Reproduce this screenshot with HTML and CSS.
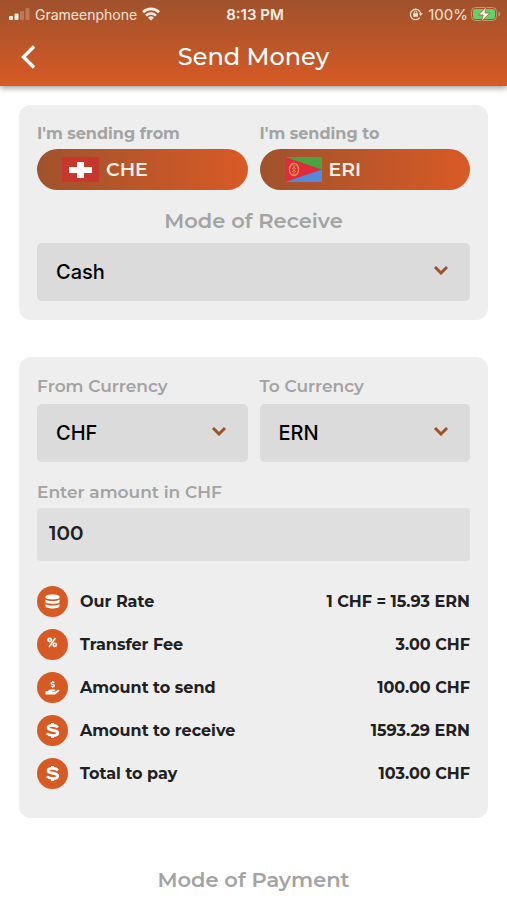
FILE: index.html
```
<!DOCTYPE html>
<html lang="en">

<head>
    <meta charset="utf-8">
    <meta name="viewport" content="width=device-width, initial-scale=1">
    <title>Send Money</title>
    <link rel="stylesheet" href="styles.css">
</head>

<body>
    <header class="header">
        <div class="status-bar">
            <div class="status-left">
                <svg class="signal" width="21" height="14" viewBox="0 0 21 14" fill="#fff0e6">
                    <rect x="0" y="9" width="4" height="4" rx="1" />
                    <rect x="5.500" y="6.500" width="4" height="6.500" rx="1" />
                    <rect x="11" y="4" width="4" height="9" rx="1" opacity="0.25" />
                    <rect x="16.500" y="1" width="4" height="12" rx="1" opacity="0.25" />
                </svg>
                <span>Grameenphone</span>
                <svg width="18" height="14" viewBox="0 0 18 14" fill="none" stroke="#fff0e6" stroke-width="2.6">
                    <path d="M1 5.2a11.4 11.4 0 0 1 16 0" />
                    <path d="M4 8.6a7.1 7.1 0 0 1 10 0" />
                    <path d="M9 13.6 6.1 10.8a4.1 4.1 0 0 1 5.8 0z" fill="#fff0e6" stroke="none" />
                </svg>
            </div>
            <div class="status-time">8:13 PM</div>
            <div class="status-right">
                <svg width="14" height="14" viewBox="0 0 14 14" fill="none" stroke="#fbe3d6" stroke-width="1.3">
                    <path d="M10.8 10.6A5.2 5.2 0 1 1 11.7 6.3" />
                    <path d="M9.8 6.2h4l-2 2.7z" fill="#fbe3d6" stroke="none" />
                    <rect x="4.2" y="6.3" width="4.8" height="3.5" rx="0.6" fill="#fbe3d6" stroke="none" />
                    <path d="M5.3 6.6V5.3a1.3 1.3 0 0 1 2.6 0v1.3" stroke-width="1" />
                </svg>
                <span>100%</span>
                <svg class="battery" width="30" height="16" viewBox="0 0 30 16">
                    <rect x="0.5" y="1.5" width="25" height="13" rx="4" fill="none" stroke="#c99476" />
                    <path d="M27.5 5.5v5c2.2-1 2.2-4 0-5z" fill="#c99476" />
                    <rect x="2" y="3" width="22" height="10" rx="2.5" fill="#5cd467" />
                    <path d="M15.5 0.5 7.5 9h4.6l-1.7 6.5L18.8 7h-4.8z" fill="#fff" stroke="#a8562b" stroke-width="0.8" />
                </svg>
            </div>
        </div>
        <div class="title-bar">
            <button class="back" type="button" aria-label="Back">
                <svg width="16" height="26" viewBox="0 0 16 26" fill="none" stroke="#fff" stroke-width="3.4">
                    <path d="M14 2.500 3.500 13 14 23.500" />
                </svg>
            </button>
            <h1>Send Money</h1>
        </div>
    </header>

    <main class="content">
        <section class="card">
            <div class="columns">
                <div class="field route">
                    <span class="label" id="from-label">I'm sending from</span>
                    <button class="country" type="button" aria-describedby="from-label">
                        <svg width="37" height="25" viewBox="0 0 37 25">
                            <rect width="37" height="25" fill="#c8372d" />
                            <path d="M15 5h7v5h8v6h-8v5h-7v-5H7v-6h8z" fill="#fff" />
                        </svg>
                        <span>CHE</span>
                    </button>
                </div>
                <div class="field route">
                    <span class="label" id="to-label">I'm sending to</span>
                    <button class="country" type="button" aria-describedby="to-label">
                        <svg width="37" height="25" viewBox="0 0 37 25">
                            <rect width="37" height="13" fill="#49a442" />
                            <rect y="12.5" width="37" height="12.5" fill="#5588d8" />
                            <path d="M0 0l37 12.5L0 25z" fill="#df2b3c" />
                            <ellipse cx="9" cy="12.5" rx="4.6" ry="6" fill="none" stroke="#ee9340" stroke-width="1.3" />
                            <path d="M9 8v10M7 12l2-2 2 2M7 15l2-2 2 2" fill="none" stroke="#ee9340" />
                        </svg>
                        <span>ERI</span>
                    </button>
                </div>
            </div>
            <label class="heading" for="receive-mode">Mode of Receive</label>
            <div class="select">
                <select id="receive-mode">
                    <option>Cash</option>
                </select>
                <svg width="16" height="10" viewBox="0 0 16 10"><path d="M2 2l6 6 6-6" /></svg>
            </div>
        </section>

        <section class="card">
            <div class="columns">
                <div class="field">
                    <label class="label" for="from-currency">From Currency</label>
                    <div class="select">
                        <select id="from-currency">
                            <option>CHF</option>
                        </select>
                        <svg width="16" height="10" viewBox="0 0 16 10"><path d="M2 2l6 6 6-6" /></svg>
                    </div>
                </div>
                <div class="field">
                    <label class="label" for="to-currency">To Currency</label>
                    <div class="select">
                        <select id="to-currency">
                            <option>ERN</option>
                        </select>
                        <svg width="16" height="10" viewBox="0 0 16 10"><path d="M2 2l6 6 6-6" /></svg>
                    </div>
                </div>
            </div>
            <div class="field amount">
                <label class="label" for="amount">Enter amount in CHF</label>
                <input id="amount" type="text" inputmode="decimal" value="100">
            </div>

            <svg class="sprite" width="0" height="0">
                <symbol id="dollar" viewBox="0 0 31 31">
                    <path d="M21 12.400c-1.200-1.400-3-2-5.400-2-2.800 0-4.600.9-4.600 2.300 0 3.500 9.800 1.600 9.800 5.200 0 1.700-2.200 2.500-5 2.500-2.700 0-4.800-.7-6-2" fill="none" stroke="#fff" stroke-width="2.8" />
                    <path d="M15.500 8v3M15.500 20v3" stroke="#fff" stroke-width="3" />
                </symbol>
            </svg>
            <dl class="summary">
                <div class="row">
                    <dt>
                        <svg class="icon" viewBox="0 0 31 31" fill="#fff">
                            <path d="M8.500 10.700c0-2.900 14-2.900 14 0v.9c0 2.500-14 2.500-14 0z" />
                            <path d="M8.500 13.600c2.700 2 11.300 2 14 0v2.400c0 2.500-14 2.500-14 0z" />
                            <path d="M8.500 18c2.700 2 11.300 2 14 0v2.200c0 2.900-14 2.900-14 0z" />
                        </svg>
                        Our Rate
                    </dt>
                    <dd>1 CHF = 15.93 ERN</dd>
                </div>
                <div class="row">
                    <dt>
                        <svg class="icon" viewBox="0 0 31 31" fill="none" stroke="#fff" stroke-width="1.6">
                            <path d="M18.500 9l-6.500 9" />
                            <ellipse cx="12.700" cy="11" rx="1.700" ry="1.600" />
                            <ellipse cx="17.800" cy="15.800" rx="1.700" ry="1.600" />
                        </svg>
                        Transfer Fee
                    </dt>
                    <dd>3.00 CHF</dd>
                </div>
                <div class="row">
                    <dt>
                        <svg class="icon" viewBox="0 0 31 31" fill="#fff">
                            <path d="M17.300 10.900c-1-1-3.300-.8-3.300.4 0 1.500 3.400.7 3.400 2.200 0 1.200-2.400 1.300-3.500.3M15.700 9v1.500M15.700 14.300v1.500" fill="none" stroke="#fff" stroke-width="1.3" />
                            <path d="M8.500 19.300h2l1.600-1.200c.6-.4 1-.6 1.700-.6h3.500c1.200 0 1.300 1.500 0 1.700h-2.300v.5h3.200l2.500-1.700c1.200-.6 2.300.5 1.300 1.400l-3.300 2.500c-.5.4-1 .6-1.700.6H8.500z" />
                        </svg>
                        Amount to send
                    </dt>
                    <dd>100.00 CHF</dd>
                </div>
                <div class="row">
                    <dt>
                        <svg class="icon"><use href="#dollar" /></svg>
                        Amount to receive
                    </dt>
                    <dd>1593.29 ERN</dd>
                </div>
                <div class="row">
                    <dt>
                        <svg class="icon"><use href="#dollar" /></svg>
                        Total to pay
                    </dt>
                    <dd>103.00 CHF</dd>
                </div>
            </dl>
        </section>

        <h2 class="heading payment">Mode of Payment</h2>
    </main>
</body>

</html>
```
FILE: styles.css
```
* {
    box-sizing: border-box;
}

body {
    margin: 0;
    background-color: #fff;
    color: #202022;
    font-family: Montserrat, Inter, sans-serif;
}

button, input, select {
    border: 0;
    margin: 0;
    font-family: inherit;
}

.header {
    background: linear-gradient(#a0522d, #d75a25);
    box-shadow: 0 2px 6px rgba(0, 0, 0, 0.4);
    color: #fff;
}

.status-bar {
    display: grid;
    grid-template-columns: 1fr auto 1fr;
    align-items: center;
    height: 28px;
    padding: 0 6px 0 9px;
    color: #fbe3d6;
    font-family: Inter, sans-serif;
    font-size: 15px;
}

.status-left, .status-right {
    display: flex;
    align-items: center;
    gap: 5px;
}

.status-left {
    font-size: 14px;
}

.status-right {
    justify-content: flex-end;
}

.battery {
    margin-left: -2px;
}

.status-time {
    color: #fff0e6;
    font-weight: 600;
}

.title-bar {
    display: grid;
    grid-template-columns: 40px 1fr 40px;
    align-items: center;
    height: 58px;
    padding: 0 8px;
}

.title-bar h1 {
    margin: 0;
    font-size: 24px;
    font-weight: 500;
    line-height: 32px;
    text-align: center;
}

.back {
    display: flex;
    justify-content: center;
    padding: 0;
    background: none;
}

.content {
    padding: 19px;
}

.card {
    padding: 18px 18px 19px;
    border-radius: 12px;
    background-color: #eee;
}

.card + .card {
    margin-top: 37px;
    padding-bottom: 23px;
}

.columns {
    display: grid;
    grid-template-columns: 1fr 1fr;
    gap: 12px;
}

.field {
    display: flex;
    flex-direction: column;
    gap: 7px;
}

.label {
    color: #a3a3a3;
    font-size: 17px;
    font-weight: 600;
    line-height: 22px;
}

.route {
    gap: 4px;
}

.route .label {
    font-size: 16px;
    font-weight: 700;
}

.country {
    display: flex;
    align-items: center;
    gap: 7px;
    height: 41px;
    padding: 0 25px;
    border-radius: 21px;
    background: linear-gradient(to right, #a0522d, #d95a26);
    color: #fff0e6;
    font-size: 19px;
    font-weight: 600;
}

.heading {
    display: block;
    margin: 17px 0 8px;
    color: #a3a3a3;
    font-size: 21px;
    font-weight: 600;
    line-height: 28px;
    text-align: center;
}

.select {
    position: relative;
}

.select select {
    appearance: none;
    width: 100%;
    height: 58px;
    padding: 0 44px 0 19px;
    border-radius: 5px;
    background-color: #dbdbdb;
    color: #000;
    font-family: Inter, sans-serif;
    font-size: 20px;
    font-weight: 500;
}

.select svg {
    position: absolute;
    top: 22px;
    right: 21px;
    fill: none;
    stroke: #a0522d;
    stroke-width: 3;
    pointer-events: none;
}

.amount {
    gap: 5px;
    margin-top: 19px;
}

.amount input {
    width: 100%;
    height: 53px;
    padding: 0 12px 3px;
    border-radius: 4px;
    background-color: #dfdfdf;
    color: #202022;
    font-size: 20px;
    font-weight: 600;
}

.sprite {
    display: block;
}

.summary {
    margin: 19px 0 0;
    font-size: 16px;
    font-weight: 700;
}

.row {
    display: flex;
    align-items: center;
    justify-content: space-between;
    height: 43px;
}

.row dt {
    display: flex;
    align-items: center;
    gap: 12px;
}

.row dd {
    margin: 0;
}

.icon {
    width: 31px;
    height: 31px;
    border-radius: 50%;
    background-color: #d75a25;
}

.payment {
    margin: 48px 0 0;
}
```
